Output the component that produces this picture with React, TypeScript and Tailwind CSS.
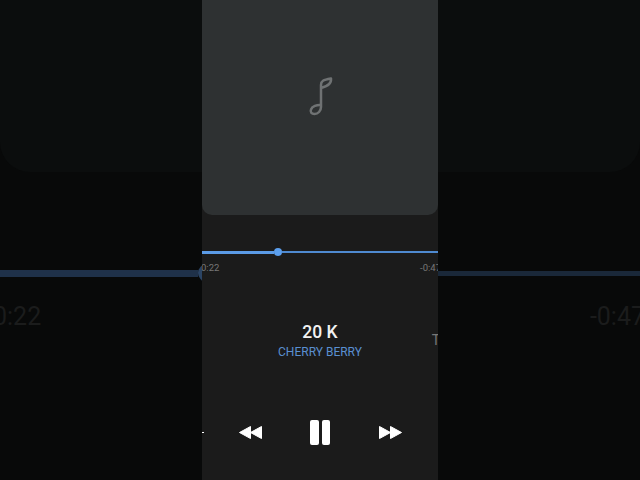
const font = { fontFamily: 'Roboto, "Liberation Sans", sans-serif' };

function MusicNote() {
  return (
    <svg width="26" height="42" viewBox="0 0 26 42" fill="none" stroke="#6f7273" strokeWidth="2.500" strokeLinejoin="round" className="ml-[-1px]">
      <path d="M14 31V9C14 5 16 4 24 2.500C24.500 7 22 9.500 14 12" />
      <path d="M14 31C14 35 11 38 7.500 38C4.500 38 3 36 4 33.500C5 30.500 10 28.500 14 29" />
    </svg>
  );
}

function Rewind({ flip }: { flip?: boolean }) {
  return (
    <svg width="23" height="13" viewBox="0 0 23 13" fill="white" className={flip ? 'rotate-180' : ''}>
      <path d="M0.500 6.500L11.500 0.500V12.500Z" stroke="white" strokeLinejoin="round" />
      <path d="M11.500 6.500L22.500 0.500V12.500Z" stroke="white" strokeLinejoin="round" />
    </svg>
  );
}

export default function App() {
  return (
    <div className="flex h-[480px] w-[640px] overflow-hidden bg-[#080909]" style={font}>
      <aside className="flex w-[202px] flex-col overflow-hidden">
        <div className="h-[172px] w-[230px] shrink-0 rounded-bl-[30px] bg-[#0b0d0d]" />
        <div className="mt-[97px] flex h-[8px] items-center">
          <div className="h-[7px] flex-1 bg-[#1f3149]" />
          <div className="mr-[-14px] h-[18px] w-[18px] shrink-0 rounded-full bg-[#2b4464]" />
        </div>
        <p className="ml-[-7px] mt-[25px] text-[25px] leading-[30px] text-[#1b1c1c]">0:22</p>
      </aside>

      <main className="relative flex w-[236px] shrink-0 flex-col overflow-hidden bg-[#1b1b1b]">
        <div className="flex h-[215px] shrink-0 justify-center rounded-b-[10px] bg-[#2e3132] pt-[76px]">
          <MusicNote />
        </div>

        <div className="mt-[32px] flex h-[10px] items-center">
          <div className="h-[3px] w-[72px] bg-[#5b9be6]" />
          <div className="h-[8px] w-[8px] rounded-full bg-[#5b9fee]" />
          <div className="h-[2px] flex-1 bg-[#4f8ad0]" />
        </div>

        <div className="mx-[-1px] mt-[5px] flex justify-between text-[9.500px] leading-[11px] text-[#777]">
          <span>0:22</span>
          <span className="mr-[-2px]">-0:47</span>
        </div>

        <div className="mt-[49px] flex flex-col items-center">
          <p className="text-[17.500px] font-medium leading-[20px] text-[#f2f2f2]">20 K</p>
          <p className="mt-[2px] text-[12px] leading-[16px] text-[#5a8fd0]">CHERRY BERRY</p>
        </div>

        <span className="absolute right-[-2px] top-[333px] text-[14px] leading-[15px] text-[#777]">T</span>

        <div className="mt-[60px] flex items-center justify-center">
          <div className="h-[1px] w-[2px] bg-white" />
          <div className="ml-[35px]"><Rewind /></div>
          <div className="ml-[48px] flex gap-[3px]">
            <div className="h-[25px] w-[9px] rounded-[2px] bg-white" />
            <div className="h-[25px] w-[8px] rounded-[2px] bg-white" />
          </div>
          <div className="ml-[49px] mr-[36px]"><Rewind flip /></div>
        </div>
      </main>

      <aside className="flex w-[202px] flex-col items-end overflow-hidden">
        <div className="h-[172px] w-[230px] shrink-0 rounded-br-[30px] bg-[#0b0d0d]" />
        <div className="mt-[97px] flex h-[8px] w-full items-center">
          <div className="h-[5px] flex-1 bg-[#1a2839]" />
        </div>
        <p className="mr-[-5px] mt-[25px] text-[25px] leading-[30px] text-[#1b1c1c]">-0:47</p>
      </aside>
    </div>
  );
}
